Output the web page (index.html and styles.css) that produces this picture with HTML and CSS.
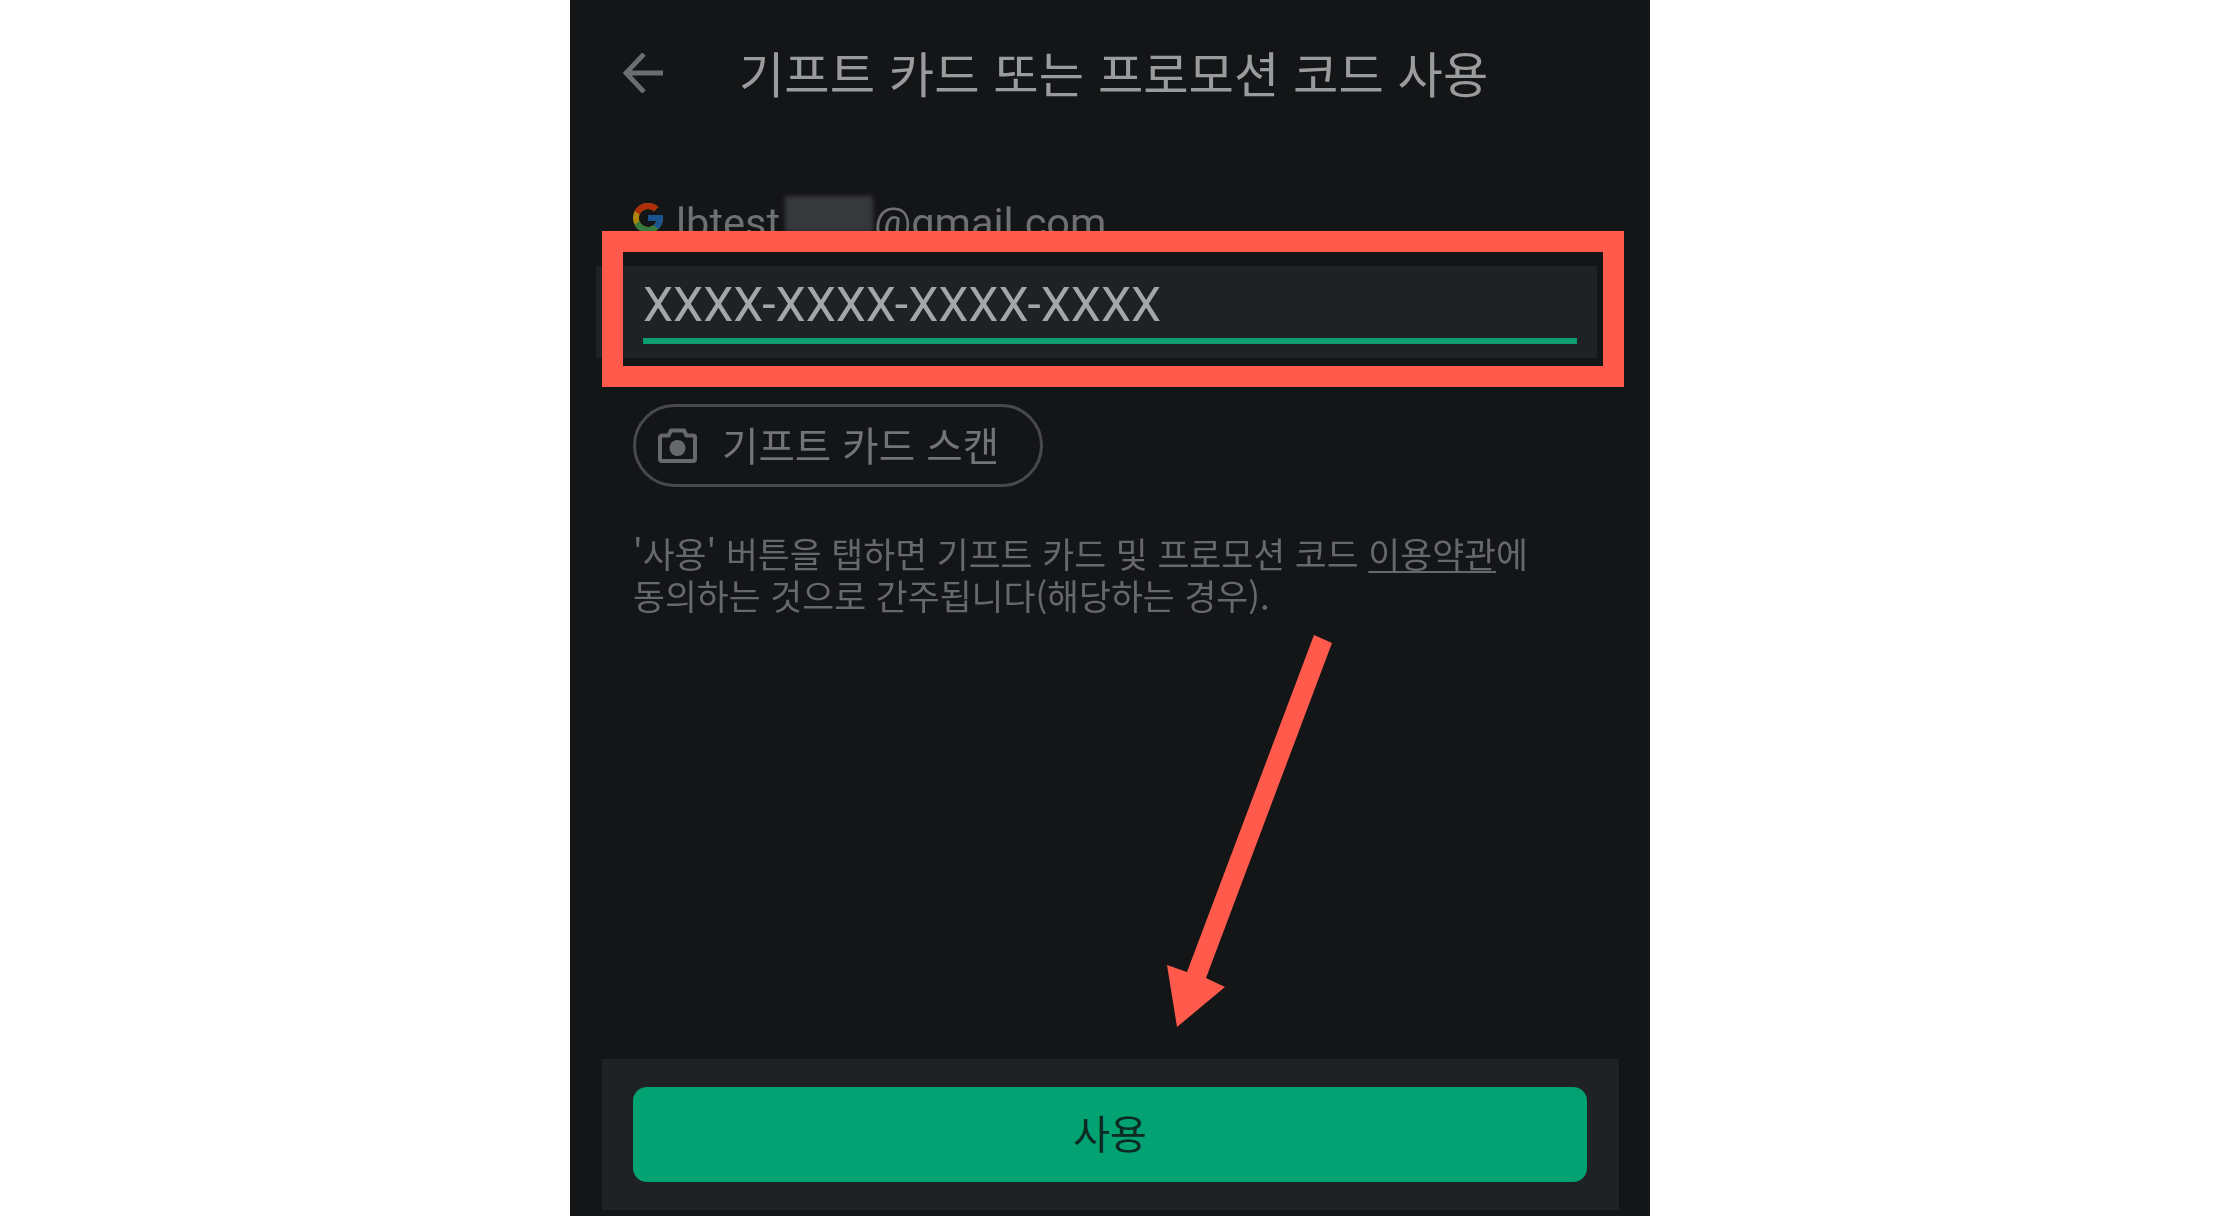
FILE: index.html
```html
<!DOCTYPE html>
<html lang="ko">
<head>
<meta charset="utf-8">
<title>기프트 카드 또는 프로모션 코드 사용</title>
<link rel="stylesheet" href="styles.css">
</head>
<body>
<main class="phone">
  <header class="header">
    <svg class="back" viewBox="0 0 41 40" aria-hidden="true"><path d="M41 20H4M22 1 4 20l18 19" fill="none" stroke="currentColor" stroke-width="4.800"/></svg>
    <h1 class="title">기프트 카드 또는 프로모션 코드 사용</h1>
  </header>
  <div class="account">
    <svg class="glogo" viewBox="4 4 40 40" aria-hidden="true">
      <path fill="#FFC107" d="M43.611 20.083H42V20H24v8h11.303c-1.649 4.657-6.08 8-11.303 8-6.627 0-12-5.373-12-12s5.373-12 12-12c3.059 0 5.842 1.154 7.961 3.039l5.657-5.657C34.046 6.053 29.268 4 24 4 12.955 4 4 12.955 4 24s8.955 20 20 20 20-8.955 20-20c0-1.341-.138-2.65-.389-3.917z"/>
      <path fill="#FF3D00" d="M6.306 14.691l6.571 4.819C14.655 15.108 18.961 12 24 12c3.059 0 5.842 1.154 7.961 3.039l5.657-5.657C34.046 6.053 29.268 4 24 4 16.318 4 9.656 8.337 6.306 14.691z"/>
      <path fill="#4CAF50" d="M24 44c5.166 0 9.86-1.977 13.409-5.192l-6.19-5.238A11.91 11.91 0 0 1 24 36c-5.202 0-9.619-3.317-11.283-7.946l-6.522 5.025C9.505 39.556 16.227 44 24 44z"/>
      <path fill="#1976D2" d="M43.611 20.083H42V20H24v8h11.303a12.04 12.04 0 0 1-4.087 5.571l.003-.002 6.19 5.238C36.971 39.205 44 34 44 24c0-1.341-.138-2.65-.389-3.917z"/>
    </svg>
    <span class="email">lbtest</span><span class="redact"></span><span class="email">@gmail.com</span>
  </div>
  <div class="field"><div class="field-line">XXXX-XXXX-XXXX-XXXX</div></div>
  <div class="chip">
    <svg class="camera" viewBox="0 0 39 35" aria-hidden="true">
      <path d="M2 9.5a2 2 0 0 1 2-2h6.5L13 2.500h13l2.500 5H35a2 2 0 0 1 2 2V31a2 2 0 0 1-2 2H4a2 2 0 0 1-2-2z" fill="none" stroke="currentColor" stroke-width="4"/>
      <circle cx="19.500" cy="20" r="8" fill="currentColor"/>
    </svg>
    <span>기프트 카드 스캔</span>
  </div>
  <p class="note">'사용' 버튼을 탭하면 기프트 카드 및 프로모션 코드 <span class="link">이용약관</span>에<br>동의하는 것으로 간주됩니다(해당하는 경우).</p>
  <footer class="bar"><div class="btn">사용</div></footer>

  <div class="highlight"></div>
  <svg class="pointer" viewBox="0 0 1080 1216" aria-hidden="true"><polygon points="744,635 762,643 636,978 655,987 607,1027 597,965 617,972"/></svg>
</main>
</body>
</html>
```

FILE: styles.css
```css
* { box-sizing: border-box; }
html, body { margin: 0; height: 100%; background: #fff; }
body {
  display: flex;
  justify-content: center;
  overflow: hidden;
  font-family: Roboto, "Noto Sans CJK KR", sans-serif;
}
.phone {
  position: relative;
  display: flex;
  flex-direction: column;
  width: 1080px;
  height: 1216px;
  background: #141517;
  overflow: hidden;
}
.header {
  display: flex;
  align-items: center;
  height: 72px;
  margin-top: 36px;
  padding-left: 52px;
  gap: 76px;
  color: #6b6d70;
}
.back { width: 41px; height: 40px; flex: none; margin-top: 2px; }
.title {
  margin: 0;
  font: 400 49.300px/72px "Noto Sans CJK KR", sans-serif;
  color: #9a9b9c;
  white-space: nowrap;
  filter: blur(.4px);
}
.account {
  display: flex;
  align-items: flex-start;
  height: 48px;
  margin-top: 91px;
  padding-left: 63px;
  font-size: 41.500px;
  line-height: 48px;
  color: #6e7073;
}
.email { filter: blur(.4px); }
.glogo { width: 30px; height: 30px; flex: none; margin: 4px 13px 0 0; opacity: .65; }
.redact {
  width: 88px;
  height: 36px;
  margin: -3px 1px 0 5px;
  background: #37383b;
  filter: blur(2px);
}
.field {
  width: 1001px;
  height: 92px;
  margin: 19px 0 0 26px;
  padding: 14px 20px 0 47px;
  background: #1f2125;
}
.field-line {
  height: 64px;
  padding-top: 1px;
  font-size: 48px;
  line-height: 48px;
  color: #a3a6aa;
  border-bottom: 6px solid #0a9e72;
  filter: blur(.4px);
}
.chip {
  display: flex;
  align-items: center;
  gap: 25px;
  width: 410px;
  height: 83px;
  margin: 46px 0 0 63px;
  padding-left: 22px;
  border: 3px solid #47494c;
  border-radius: 42px;
  font: 400 39.600px/44px "Noto Sans CJK KR", sans-serif;
  color: #727477;
}
.chip span { white-space: nowrap; margin-top: -3px; filter: blur(.4px); }
.camera { width: 39px; height: 35px; flex: none; color: #66686b; }
.note {
  margin: 45px 0 0 63px;
  font: 400 34.700px/42px "Noto Sans CJK KR", sans-serif;
  color: #66686b;
  white-space: nowrap;
  filter: blur(.4px);
}
.link { text-decoration: underline; text-underline-offset: 3px; text-decoration-thickness: 2px; }
.bar {
  width: 1017px;
  height: 151px;
  margin: auto 0 6px 32px;
  padding: 28px 31px;
  background: #1f2125;
}
.btn {
  display: flex;
  align-items: center;
  justify-content: center;
  width: 954px;
  height: 95px;
  padding-bottom: 5px;
  background: #02a272;
  border-radius: 14px;
  font: 400 40px/44px "Noto Sans CJK KR", sans-serif;
  color: #0d2a23;
}
.highlight {
  position: absolute;
  left: 32px;
  top: 231px;
  width: 1022px;
  height: 156px;
  border: 21px solid #ff5a4c;
}
.pointer {
  position: absolute;
  left: 0;
  top: 0;
  width: 1080px;
  height: 1216px;
  fill: #ff5a4c;
}
```
